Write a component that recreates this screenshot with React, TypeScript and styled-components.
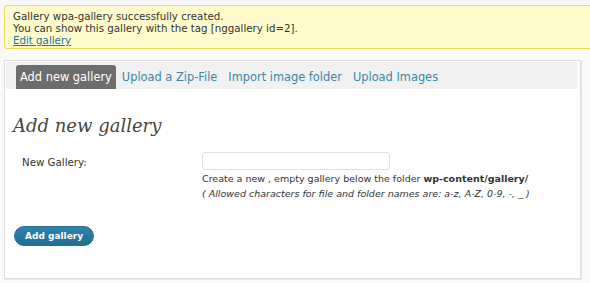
import React from "react";
import styled, { createGlobalStyle } from "styled-components";

const Global = createGlobalStyle`
  html, body { margin: 0; padding: 0; background: #f9f9f9; overflow: hidden; }
  body { font-family: "DejaVu Sans", Verdana, sans-serif; font-size: 10.25px; color: #333; }
`;

const Page = styled.div`
  width: 590px;
  height: 283px;
  padding-top: 5px;
  box-sizing: border-box;
`;

const Notice = styled.div`
  margin: 0 -20px 0 4px;
  background: #fffbcc;
  border: 1px solid #e6db55;
  border-radius: 3px;
  padding: 4px 8px 2px 8px;
  line-height: 12px;
  font-size: 10.25px;
  color: #333;
`;

const Line = styled.div``;

const EditLink = styled.a`
  color: #21759b;
  text-decoration: underline;
`;

const Panel = styled.div`
  margin: 11px 10px 0 4px;
  width: 575px;
  height: 217px;
  background: #fff;
  border: 1px solid #dfdfdf;
  box-shadow: 1px 1px 0 #e8e8e8;
  display: flex;
  flex-direction: column;
`;

const TabBar = styled.div`
  margin: 1px 3px 0 1px;
  height: 27px;
  background: #f1f1f1;
  display: flex;
  align-items: flex-end;
  padding-left: 10px;
`;

const Tab = styled.div<{ $active?: boolean }>`
  height: 24px;
  display: flex;
  align-items: center;
  padding: 0 ${(p) => (p.$active ? "4px" : "0")};
  margin-left: ${(p) => (p.$active ? "0" : "6px")};
  margin-right: ${(p) => (p.$active ? "0" : "5px")};
  font-size: 11.4px;
  border-radius: 3px 3px 0 0;
  background: ${(p) => (p.$active ? "#6d6d6d" : "transparent")};
  color: ${(p) => (p.$active ? "#fff" : "#3a87ad")};
`;

const Body = styled.div`
  padding: 24px 0 0 8px;
  display: flex;
  flex-direction: column;
`;

const Heading = styled.h2`
  margin: 0;
  font-family: "DejaVu Serif", Georgia, serif;
  font-style: italic;
  font-weight: normal;
  font-size: 18px;
  line-height: 26px;
  color: #464646;
`;

const Row = styled.div`
  display: grid;
  grid-template-columns: 180px 1fr;
  margin-top: 13px;
  padding-left: 9px;
`;

const Label = styled.div`
  padding-top: 4px;
  font-size: 10.25px;
  color: #333;
`;

const Field = styled.div`
  display: flex;
  flex-direction: column;
`;

const Input = styled.div`
  width: 186px;
  height: 16px;
  border: 1px solid #dfdfdf;
  border-radius: 3px;
  background: #fff;
`;

const Desc = styled.div<{ $italic?: boolean }>`
  margin-top: 2px;
  font-size: 9.5px;
  line-height: 13px;
  font-style: ${(p) => (p.$italic ? "italic" : "normal")};
  color: #333;
  white-space: nowrap;
`;

const Bold = styled.b`
  font-weight: bold;
`;

const Button = styled.div`
  margin: 26px 0 0 1px;
  align-self: flex-start;
  height: 18px;
  padding: 0 10px;
  display: flex;
  align-items: center;
  border-radius: 10px;
  background: linear-gradient(#2f83ad, #1f6e94);
  color: #fff;
  font-weight: bold;
  font-size: 9px;
  border: 1px solid #2a6f92;
`;

export default function App() {
  return (
    <Page>
      <Global />
      <Notice>
        <Line>Gallery wpa-gallery successfully created.</Line>
        <Line>You can show this gallery with the tag [nggallery id=2].</Line>
        <Line>
          <EditLink>Edit gallery</EditLink>
        </Line>
      </Notice>
      <Panel>
        <TabBar>
          <Tab $active>Add new gallery</Tab>
          <Tab>Upload a Zip-File</Tab>
          <Tab>Import image folder</Tab>
          <Tab>Upload Images</Tab>
        </TabBar>
        <Body>
          <Heading>Add new gallery</Heading>
          <Row>
            <Label>New Gallery:</Label>
            <Field>
              <Input />
              <Desc>
                Create a new , empty gallery below the folder <Bold>wp-content/gallery/</Bold>
              </Desc>
              <Desc $italic>( Allowed characters for file and folder names are: a-z, A-Z, 0-9, -, _ )</Desc>
            </Field>
          </Row>
          <Button>Add gallery</Button>
        </Body>
      </Panel>
    </Page>
  );
}
